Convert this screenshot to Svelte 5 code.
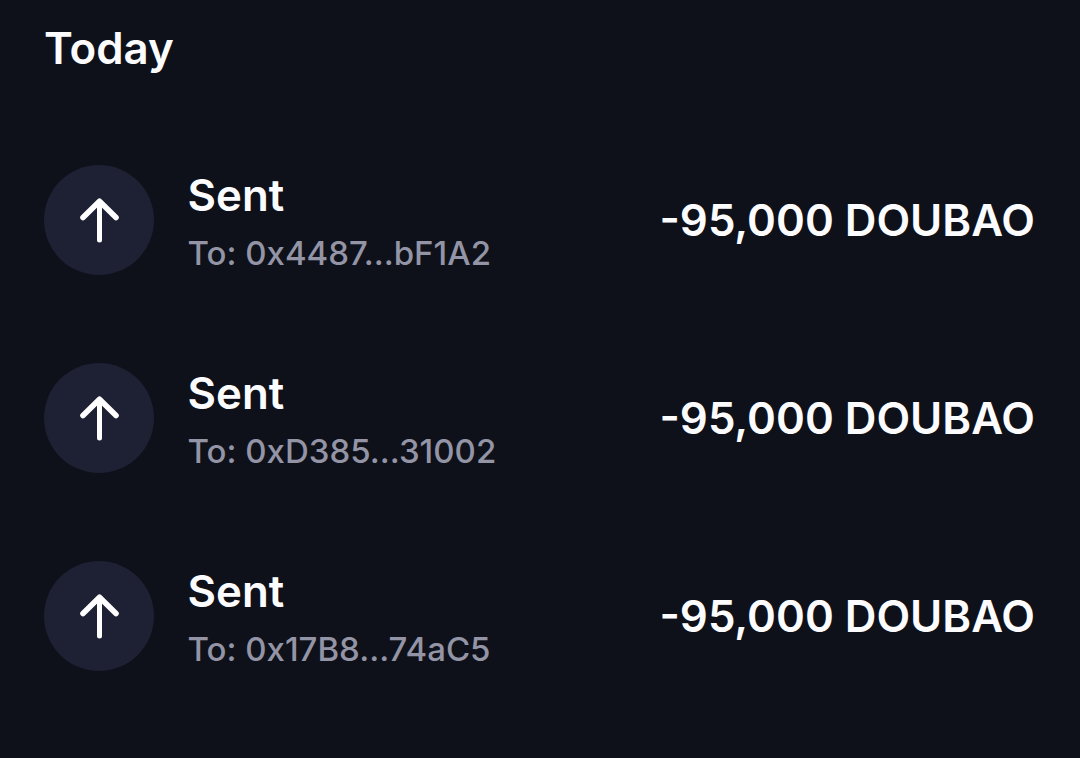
<script>
    const transactions = [
        { title: "Sent", to: "0x4487...bF1A2", amount: "-95,000 DOUBAO" },
        { title: "Sent", to: "0xD385...31002", amount: "-95,000 DOUBAO" },
        { title: "Sent", to: "0x17B8...74aC5", amount: "-95,000 DOUBAO" }
    ];
</script>

<main class="history">
    <h2 class="day">Today</h2>
    <ul class="transactions">
        {#each transactions as tx}
            <li class="transaction">
                <span class="icon">
                    <svg viewBox="0 0 110 110" aria-hidden="true">
                        <path d="M55.5 75V37" />
                        <path class="head" d="M39 52.5L55.5 36.2L72 52.5" />
                    </svg>
                </span>
                <div class="details">
                    <span class="title">{tx.title}</span>
                    <span class="address">To: {tx.to}</span>
                </div>
                <span class="amount">{tx.amount}</span>
            </li>
        {/each}
    </ul>
</main>

<style>
    :global(body){
        background-color: #0e1119;
    }

    .history{
        /* design */
        font-family: Inter, sans-serif;
        color: #fcfcff;

        /* size */
        box-sizing: border-box;
        height: 758px;
        padding: 20px 45px 0 44px;
    }

    .day{
        font-size: 43.8px;
        font-weight: 600;
        line-height: 58px;
        margin: 0;
    }

    .transactions{
        list-style: none;
        margin: 87px 0 0;
        padding: 0;

        /* display */
        display: flex;
        flex-direction: column;
        gap: 88px;
    }

    .transaction{
        height: 110px;

        /* display */
        display: flex;
        align-items: center;
    }

    .icon{
        background-color: #1e2034;
        border-radius: 50%;
        flex: none;
        height: 110px;
        width: 110px;
    }

    .icon svg{
        display: block;
        fill: none;
        stroke: #ffffff;
        stroke-width: 5;
        stroke-linecap: round;
        stroke-linejoin: round;
    }

    .icon .head{
        stroke-width: 5.6;
    }

    .details{
        margin-left: 33.5px;
        padding-top: 4px;

        /* display */
        display: flex;
        flex: 1;
        flex-direction: column;
        gap: 4px;
    }

    .title{
        font-size: 43.8px;
        font-weight: 600;
        line-height: 58px;
    }

    .address{
        color: #9394a5;
        font-size: 33px;
        font-weight: 500;
        line-height: 48px;
    }

    .amount{
        font-size: 43.8px;
        font-weight: 600;
        line-height: 56px;
        padding-top: 2px;
        white-space: nowrap;
    }
</style>
